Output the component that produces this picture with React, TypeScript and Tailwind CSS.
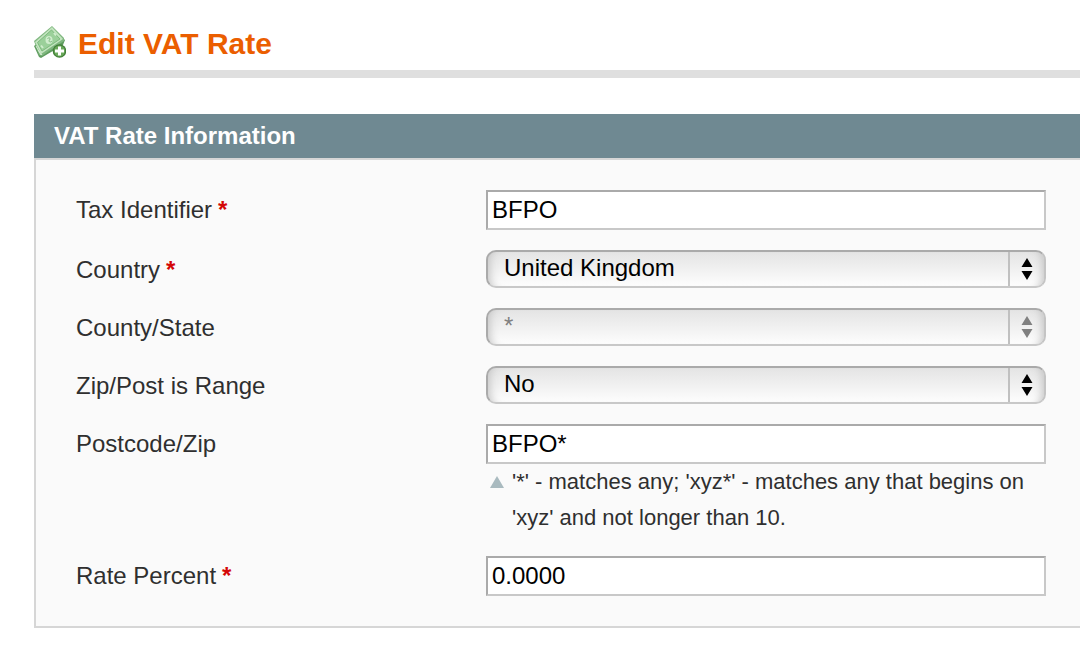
import React from "react";

type FieldProps = {
  id: string;
  label: string;
  required?: boolean;
  children: React.ReactNode;
};

const Field: React.FC<FieldProps> = ({ id, label, required, children }) => {
  return (
    <div className="flex items-start">
      <label htmlFor={id} className="-mb-1 w-[410px] shrink-0 text-2xl leading-10 text-[#2f2f2f]">
        {label}
        {required && <span className="ml-1.5 font-bold text-[#d40707]">*</span>}
      </label>
      <div className="min-w-0 flex-1">{children}</div>
    </div>
  );
};

type TextInputProps = {
  id: string;
  value: string;
};

const TextInput: React.FC<TextInputProps> = ({ id, value }) => {
  return (
    <input
      id={id}
      type="text"
      defaultValue={value}
      className="block h-10 w-full border-2 border-t-[#aaaaaa] border-r-[#c8c8c8] border-b-[#c8c8c8] border-l-[#aaaaaa] bg-white px-1 text-2xl text-black outline-none"
    />
  );
};

type SelectInputProps = {
  id: string;
  options: string[];
  disabled?: boolean;
};

const SelectInput: React.FC<SelectInputProps> = ({ id, options, disabled }) => {
  return (
    <div className="relative">
      <select
        id={id}
        disabled={disabled}
        className="block h-[38px] w-full appearance-none rounded-[10px] border-2 border-t-[#aaaaaa] border-r-[#c4c4c4] border-b-[#c8c8c8] border-l-[#aaaaaa] bg-linear-to-b from-[#e4e4e4] to-[#fdfdfd] pr-10 pb-0.5 pl-4 text-2xl leading-8 text-black opacity-100 shadow-[inset_10px_0_8px_-8px_#c4c4c4,inset_-10px_0_8px_-8px_#c4c4c4] outline-none disabled:text-[#808080]"
      >
        {options.map((option) => (
          <option key={option}>{option}</option>
        ))}
      </select>
      <div className="pointer-events-none absolute inset-y-0.5 right-0.5 flex w-9 items-center justify-center border-l-2 border-[#c0c0c0]">
        <svg width="12" height="22" viewBox="0 0 12 22" fill={disabled ? "#808080" : "#000000"} aria-hidden="true">
          <path d="M6 0 11.5 9H.5zM.5 13h11L6 22z" />
        </svg>
      </div>
    </div>
  );
};

const MoneyIcon: React.FC = () => {
  return (
    <svg width="32" height="32" viewBox="0 0 32 32" aria-hidden="true">
      <path d="M0 20 20 4l11 10-2 5L7 32 5 31z" fill="#5f9c5f" />
      <path d="M0 15 18 0l12 12v3L8 30 5 29z" fill="#7fb77f" />
      <path d="M1 16 18 1l11 12L7 28z" fill="#c3e4bf" />
      <path d="M3.500 16.500 17.500 4l8.500 9L8 25z" fill="#9bd09a" stroke="#7dba7d" />
      <path d="m2 20 5 9M4 24l4 5" stroke="#d5ecd2" strokeWidth="1" />
      <ellipse cx="15" cy="14" rx="3.500" ry="4" fill="#d0edcd" />
      <path d="M13.500 12.500c2-1.500 3.500 0 2 1.500s1 3 2.500 1" fill="none" stroke="#7fb77f" />
      <path d="M7 19.500 9 22M20 7l2 2.500" stroke="#d0edcd" strokeWidth="2" />
      <circle cx="25.500" cy="25" r="6.800" fill="#427f38" />
      <circle cx="25.500" cy="25" r="5.500" fill="#6aa95a" />
      <path d="M24 20.500h3v3h3v3h-3v3h-3v-3h-3v-3h3z" fill="#ffffff" />
    </svg>
  );
};

export default function App() {
  return (
    <main className="min-h-screen bg-white pt-[18px] pl-[34px] font-['Liberation_Sans',Arial,sans-serif]">
      <header className="flex h-[60px] items-start gap-3 border-b-8 border-[#dfdfdf]">
        <div className="pt-2">
          <MoneyIcon />
        </div>
        <h1 className="text-3xl leading-[52px] font-bold text-[#eb5e00]">Edit VAT Rate</h1>
      </header>

      <section className="mt-9">
        <h2 className="bg-[#6f8992] px-5 text-2xl leading-[44px] font-bold text-white">VAT Rate Information</h2>
        <form className="flex flex-col gap-5 border-y-2 border-l-2 border-[#d6d6d6] bg-[#fafafa] py-[30px] pr-[34px] pl-10">
          <Field id="tax-identifier" label="Tax Identifier" required>
            <TextInput id="tax-identifier" value="BFPO" />
          </Field>
          <Field id="country" label="Country" required>
            <SelectInput id="country" options={["United Kingdom"]} />
          </Field>
          <Field id="county" label="County/State">
            <SelectInput id="county" options={["*"]} disabled />
          </Field>
          <Field id="zip-range" label="Zip/Post is Range">
            <SelectInput id="zip-range" options={["No", "Yes"]} />
          </Field>
          <Field id="postcode" label="Postcode/Zip">
            <TextInput id="postcode" value="BFPO*" />
            <div className="flex items-start gap-2 pl-1 text-[22px] leading-9 text-[#2f2f2f]">
              <svg width="14" height="12" viewBox="0 0 14 12" className="mt-3 shrink-0" aria-hidden="true">
                <path d="M7 0 14 12H0z" fill="#a9babf" />
              </svg>
              <p>'*' - matches any; 'xyz*' - matches any that begins on 'xyz' and not longer than 10.</p>
            </div>
          </Field>
          <Field id="rate" label="Rate Percent" required>
            <TextInput id="rate" value="0.0000" />
          </Field>
        </form>
      </section>
    </main>
  );
}
